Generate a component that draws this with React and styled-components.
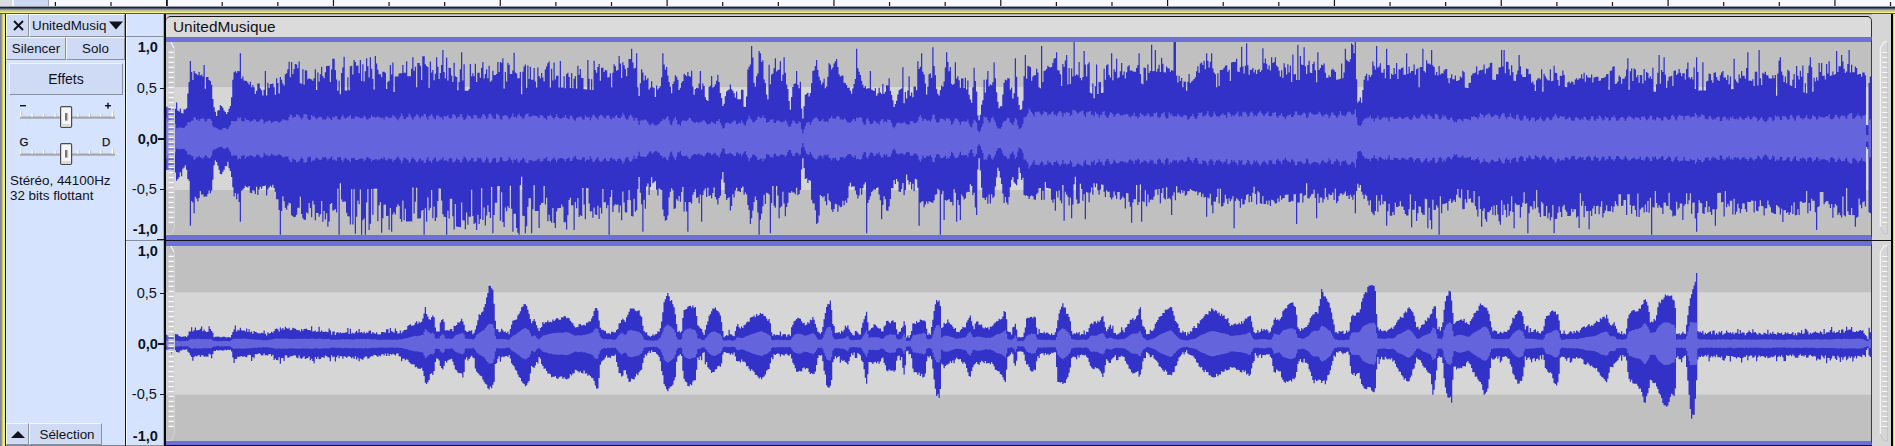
import React from "react";
import styled, { createGlobalStyle, css } from "styled-components";

const GlobalStyle = createGlobalStyle`
  body {
    margin: 0;
    background: #d6d6d6;
    font-family: "Liberation Sans", Arial, sans-serif;
    overflow: hidden;
  }
`;

/* ---------- waveform data ---------- */

// Envelopes are in thirds of a pixel: [offset, outer top, inner top, inner bottom, outer bottom, rms].
const LEFT_CENTER = 415;
const LEFT_SEGMENTS = [
  [0, [
    [500, 315, 330, 500, 515, 55], [524, 310, 330, 510, 520, 50], [527, 305, 330, 520, 545, 32], [545, 325, 340, 500, 520, 32],
    [557, 325, 345, 490, 505, 35], [568, 215, 240, 570, 600, 55], [585, 205, 225, 590, 615, 58], [605, 215, 250, 575, 590, 57],
    [632, 240, 265, 565, 590, 55], [638, 315, 325, 500, 530, 40], [648, 340, 350, 480, 490, 28], [660, 310, 325, 520, 535, 28],
    [680, 340, 345, 480, 500, 28], [692, 300, 320, 510, 540, 45], [699, 205, 225, 585, 605, 58], [720, 205, 230, 590, 610, 57],
    [730, 235, 255, 555, 575, 55], [770, 245, 275, 560, 590, 52], [815, 240, 275, 550, 580, 50], [835, 220, 265, 600, 640, 52],
    [850, 225, 260, 600, 630, 55], [865, 175, 215, 600, 640, 62], [890, 185, 230, 610, 660, 68], [950, 190, 250, 600, 670, 62],
    [988, 190, 250, 600, 670, 60],
  ]],
  [330, [
    [0, 185, 250, 590, 660, 62], [100, 175, 245, 600, 690, 62], [200, 185, 245, 590, 670, 64], [300, 175, 240, 590, 665, 67],
    [400, 185, 250, 600, 680, 64], [500, 185, 245, 590, 680, 66], [600, 195, 245, 590, 690, 66], [700, 195, 245, 590, 670, 62],
    [800, 190, 250, 590, 660, 64], [850, 190, 240, 590, 650, 64], [880, 180, 215, 600, 670, 68], [918, 180, 220, 590, 670, 60],
    [925, 290, 310, 525, 530, 35], [932, 200, 220, 600, 650, 60], [940, 220, 245, 600, 660, 55], [958, 240, 280, 555, 610, 42],
    [975, 250, 280, 540, 590, 42], [990, 245, 270, 560, 590, 45], [998, 175, 200, 620, 665, 62], [1010, 180, 220, 610, 660, 62],
    [1022, 270, 280, 540, 570, 42], [1032, 215, 240, 600, 660, 58], [1050, 250, 290, 560, 600, 40], [1062, 215, 225, 590, 640, 58],
    [1082, 210, 250, 590, 650, 55], [1100, 240, 290, 550, 600, 42], [1110, 215, 250, 580, 650, 52], [1130, 250, 290, 550, 600, 45],
    [1150, 235, 275, 560, 600, 48], [1165, 230, 250, 590, 630, 55], [1177, 320, 320, 510, 520, 30], [1185, 260, 290, 580, 590, 42],
    [1199, 250, 270, 590, 650, 45],
  ]],
  [730, [
    [0, 235, 260, 580, 640, 50], [15, 250, 300, 550, 580, 48], [45, 240, 300, 560, 580, 45], [55, 190, 210, 620, 650, 62],
    [63, 140, 180, 620, 680, 62], [75, 240, 290, 570, 590, 50], [88, 155, 170, 640, 690, 68], [100, 180, 220, 600, 640, 60],
    [110, 260, 310, 560, 580, 50], [120, 230, 250, 570, 600, 55], [135, 180, 220, 580, 650, 52], [165, 175, 230, 600, 650, 52],
    [178, 330, 350, 580, 590, 32], [185, 260, 270, 570, 590, 50], [200, 215, 250, 570, 590, 50], [211, 250, 280, 560, 580, 45],
    [214, 355, 358, 475, 475, 15], [219, 355, 358, 475, 475, 15], [222, 280, 285, 530, 535, 42], [240, 270, 285, 540, 570, 45],
    [247, 200, 215, 610, 650, 60], [262, 190, 220, 600, 660, 60], [272, 240, 270, 570, 600, 50], [300, 190, 230, 600, 630, 58],
    [320, 180, 205, 610, 650, 65], [340, 220, 240, 600, 650, 57], [362, 270, 290, 540, 560, 48], [380, 180, 220, 600, 630, 65],
    [395, 220, 260, 560, 590, 58], [402, 260, 290, 530, 550, 40], [410, 240, 270, 580, 620, 55], [420, 240, 290, 570, 590, 45],
    [440, 265, 290, 550, 570, 48], [455, 260, 290, 580, 630, 50], [475, 240, 260, 590, 640, 55], [490, 300, 330, 520, 540, 35],
    [505, 270, 290, 550, 590, 48], [530, 250, 300, 540, 590, 45], [560, 260, 290, 550, 580, 50], [567, 185, 200, 600, 650, 65],
    [590, 210, 270, 590, 615, 52], [608, 165, 200, 600, 625, 65], [622, 270, 300, 560, 570, 50], [632, 240, 270, 580, 610, 55],
    [648, 165, 200, 590, 620, 62], [665, 210, 270, 570, 620, 45], [677, 210, 240, 600, 640, 60], [690, 240, 270, 580, 610, 45],
    [712, 240, 270, 570, 590, 58], [722, 320, 330, 540, 550, 25], [730, 205, 220, 590, 620, 60], [738, 270, 290, 580, 640, 50],
    [743, 360, 362, 470, 475, 14], [747, 360, 362, 475, 480, 18], [752, 320, 330, 550, 560, 35], [760, 245, 270, 590, 620, 60],
    [780, 220, 260, 570, 610, 55], [793, 220, 260, 560, 600, 58], [803, 310, 320, 495, 500, 30], [812, 320, 340, 540, 550, 28],
    [820, 240, 250, 600, 615, 58], [836, 225, 260, 590, 615, 58], [848, 280, 300, 515, 530, 40], [856, 200, 240, 570, 590, 58],
    [865, 300, 320, 500, 510, 30], [875, 320, 330, 530, 550, 32], [880, 220, 250, 560, 580, 60], [890, 190, 220, 580, 600, 80],
    [930, 205, 250, 560, 610, 75], [980, 180, 240, 570, 610, 72], [1030, 175, 230, 570, 620, 82], [1090, 190, 260, 560, 590, 72],
    [1150, 190, 250, 570, 600, 70], [1199, 180, 210, 580, 640, 70],
  ]],
  [1130, [
    [0, 190, 220, 575, 630, 68], [50, 200, 245, 570, 620, 70], [75, 170, 215, 580, 610, 70], [120, 200, 220, 575, 620, 70],
    [170, 220, 260, 565, 585, 62], [215, 180, 210, 575, 600, 72], [270, 180, 240, 580, 620, 70], [320, 170, 215, 590, 620, 72],
    [370, 210, 235, 575, 610, 74], [400, 160, 190, 600, 625, 74], [480, 180, 230, 590, 610, 68], [500, 165, 220, 590, 610, 72],
    [550, 180, 230, 580, 610, 72], [600, 210, 235, 575, 610, 70], [640, 180, 220, 580, 600, 72], [665, 140, 165, 585, 600, 78],
    [676, 150, 170, 580, 610, 75], [680, 290, 310, 540, 555, 40], [695, 290, 310, 560, 580, 40], [701, 230, 260, 580, 600, 60],
    [730, 175, 215, 600, 640, 60], [780, 190, 225, 600, 650, 60], [850, 190, 225, 600, 650, 62], [900, 190, 225, 620, 670, 66],
    [950, 200, 235, 600, 660, 62], [975, 230, 250, 580, 620, 52], [1030, 200, 250, 590, 640, 62], [1060, 190, 225, 620, 665, 70],
    [1109, 180, 225, 610, 670, 66],
  ]],
  [1500, [
    [0, 180, 220, 600, 650, 68], [50, 190, 230, 610, 660, 62], [110, 215, 260, 590, 650, 58], [165, 195, 240, 610, 670, 65],
    [220, 225, 255, 600, 660, 58], [300, 215, 255, 600, 650, 60], [400, 195, 250, 600, 650, 62], [450, 210, 260, 590, 640, 60],
    [530, 200, 240, 600, 655, 64], [600, 190, 250, 600, 660, 66], [650, 220, 260, 600, 660, 60], [720, 210, 250, 590, 640, 60],
    [800, 205, 240, 600, 650, 58], [850, 185, 230, 610, 660, 64], [920, 195, 260, 590, 640, 60], [1000, 180, 230, 600, 660, 66],
    [1060, 180, 220, 620, 670, 68], [1095, 220, 240, 600, 640, 66], [1098, 375, 378, 440, 450, 10], [1103, 375, 378, 440, 450, 10],
    [1105, 230, 245, 630, 640, 60], [1117, 200, 210, 630, 640, 60],
  ]],
];

const LEFT_PEAKS = [
  [190.7, 183], [204.5, 195], [240.5, 160], [265.5, 213], [344, 170], [354, 180], [366, 175], [370, 172], [375.5, 168],
  [413, 172], [437, 172], [443, 150], [462, 157], [503, 175], [514.5, 158], [588, 180], [594, 182], [619, 168], [632, 146],
  [637, 160], [663, 160], [691, 212], [700, 213], [711, 228], [718, 224], [751, 138], [759.5, 153], [769, 194], [775, 175],
  [784, 172], [797, 213], [817, 180], [829, 190], [837, 177], [857, 146], [870, 213], [889, 235], [903, 202], [909, 229],
  [918, 184], [922, 160], [933, 142], [946.5, 157], [955.5, 187], [974, 203], [988, 213], [994, 187], [1015.5, 175],
  [1025, 165], [1042, 138], [1057, 157], [1067, 165], [1074.5, 126], [1084.5, 153], [1111, 160], [1117, 176], [1139, 160],
  [1152, 134], [1155, 150], [1162, 173], [1174.5, 126], [1175.7, 126], [1207, 160], [1212, 160], [1241, 140], [1246, 130],
  [1263, 145], [1298, 134], [1304.5, 142], [1318, 157], [1345, 146], [1351, 130], [1353, 134], [1355.7, 126], [1376, 138],
  [1387, 146], [1407, 160], [1423, 146], [1431, 150], [1501, 150], [1504, 150], [1519.5, 165], [1628, 175], [1659, 165],
  [1664, 172], [1697, 172], [1734, 176], [1748, 157], [1759.5, 150], [1780, 172], [1810, 172], [1836, 153], [1842, 165],
  [1849.5, 150],
];

const LEFT_DIPS = [
  [190.7, 677], [194, 640], [240.5, 665], [280.5, 704], [328, 680], [339.5, 704], [361, 704], [365.5, 704], [369, 690],
  [381, 698], [392, 695], [424.5, 704], [446, 704], [465, 688], [476, 690], [513, 695], [518, 698], [525.5, 700], [531, 700],
  [539, 684], [574, 690], [609.5, 704], [643, 695], [688, 695], [701, 665], [750, 672], [759, 704], [770.5, 700],
  [779, 655], [817, 672], [867, 700], [882, 658], [919.5, 677], [940.5, 704], [944, 660], [956, 665], [960, 660], [976, 645],
  [1055, 632], [1064.5, 662], [1072, 655], [1085.5, 658], [1131, 668], [1141, 665], [1172, 645], [1206, 650], [1213, 640],
  [1234.5, 685], [1296, 672], [1317, 655], [1355, 640], [1386, 677], [1412, 682], [1428, 685], [1432, 688], [1439.5, 704],
  [1481, 680], [1514, 685], [1528, 700], [1554.5, 700], [1579, 684], [1589, 688], [1652, 704], [1697, 695], [1715, 677],
  [1816, 690], [1855, 680],
];

const LEFT_NOTCHES_UP = [[340.5, 283], [394, 276], [522, 283], [416, 262], [565, 265], [469, 268], [612, 262], [1186.7, 272], [1094.5, 295], [1217, 262], [1419, 262], [1543, 275], [1655, 275], [1699, 272], [1776, 287], [1807, 280]];
const LEFT_NOTCHES_DOWN = [[340.5, 550], [522, 530], [1075.5, 530], [1307, 550], [1254, 560], [1136.5, 555], [431, 570], [501, 577], [612, 570], [1537, 570], [1655, 573], [1725, 573], [1846, 565], [1524, 577]];

// [offset, top, bottom]
const RIGHT_CENTER = 1031;
const RIGHT_SEGMENTS = [
  [0, [
    [500, 1007, 1055], [525, 1005, 1055], [545, 1010, 1050], [560, 1010, 1048], [570, 990, 1068], [600, 992, 1070], [632, 992, 1065],
    [640, 1011, 1052], [690, 1011, 1050], [697, 990, 1072], [730, 988, 1072], [760, 997, 1066], [800, 1003, 1062], [830, 990, 1076],
    [860, 988, 1070], [900, 990, 1072], [960, 993, 1074], [988, 993, 1070],
  ]],
  [330, [
    [0, 1000, 1068], [50, 998, 1072], [100, 995, 1074], [150, 1000, 1066], [200, 998, 1064], [220, 993, 1074], [240, 975, 1090],
    [262, 968, 1100], [278, 960, 1110], [284, 920, 1150], [292, 955, 1148], [300, 960, 1120], [309, 945, 1125], [315, 990, 1075],
    [325, 992, 1080], [330, 965, 1105], [338, 950, 1105], [345, 992, 1080], [365, 992, 1075], [375, 972, 1110], [393, 958, 1125],
    [399, 962, 1135], [404, 993, 1075], [430, 998, 1070], [436, 980, 1115], [445, 945, 1120], [460, 930, 1140], [467, 895, 1155],
    [475, 862, 1165], [486, 860, 1158], [490, 900, 1155], [496, 990, 1072], [535, 1000, 1068], [545, 965, 1090], [560, 955, 1120],
    [572, 925, 1140], [584, 912, 1160], [597, 940, 1145], [602, 975, 1095], [612, 958, 1100], [625, 1000, 1065], [637, 968, 1100],
    [665, 962, 1130], [712, 952, 1135], [735, 978, 1110], [765, 972, 1118], [785, 955, 1130], [794, 922, 1155], [801, 930, 1168],
    [810, 985, 1090], [820, 995, 1070], [855, 1000, 1068], [864, 975, 1115], [873, 955, 1130], [885, 965, 1105], [893, 940, 1145],
    [903, 925, 1140], [925, 935, 1120], [934, 955, 1110], [940, 998, 1070], [960, 1006, 1055], [980, 1004, 1058], [990, 985, 1090],
    [1000, 910, 1150], [1010, 880, 1178], [1023, 905, 1158], [1033, 935, 1140], [1040, 990, 1070], [1052, 1005, 1062],
    [1058, 935, 1130], [1075, 918, 1160], [1096, 925, 1135], [1101, 975, 1075], [1120, 1005, 1060], [1135, 950, 1110],
    [1150, 922, 1120], [1160, 930, 1105], [1172, 955, 1095], [1178, 1010, 1055], [1199, 1003, 1066],
  ]],
  [730, [
    [0, 1008, 1058], [12, 1005, 1060], [20, 975, 1090], [35, 985, 1080], [50, 968, 1100], [68, 950, 1115], [90, 940, 1136],
    [105, 950, 1120], [118, 965, 1100], [124, 1002, 1065], [180, 1006, 1065], [188, 965, 1095], [203, 950, 1118], [225, 975, 1105],
    [247, 955, 1125], [256, 970, 1105], [262, 1000, 1068], [274, 1000, 1065], [281, 950, 1110], [290, 910, 1162], [301, 905, 1162],
    [307, 970, 1080], [315, 1000, 1068], [335, 995, 1078], [352, 972, 1095], [360, 1003, 1062], [390, 1000, 1065], [398, 965, 1095],
    [409, 935, 1155], [414, 990, 1090], [430, 975, 1088], [445, 980, 1088], [455, 1000, 1068], [466, 968, 1105], [480, 965, 1118],
    [495, 968, 1110], [500, 1000, 1065], [512, 998, 1070], [522, 953, 1130], [527, 1012, 1055], [541, 1008, 1060], [547, 970, 1110],
    [565, 965, 1122], [583, 958, 1132], [590, 1000, 1066], [602, 1000, 1072], [610, 935, 1130], [617, 905, 1185], [628, 900, 1190],
    [633, 985, 1090], [643, 968, 1103], [654, 960, 1090], [670, 985, 1085], [682, 995, 1075], [705, 980, 1095], [718, 942, 1140],
    [728, 988, 1090], [740, 965, 1090], [765, 985, 1085], [785, 985, 1090], [793, 965, 1105], [812, 955, 1125], [825, 930, 1148],
    [832, 995, 1068], [845, 1002, 1060], [855, 965, 1105], [861, 1012, 1055], [878, 1012, 1055], [888, 958, 1090], [903, 950, 1115],
    [915, 955, 1105], [921, 1000, 1065], [975, 1002, 1062], [982, 960, 1145], [995, 908, 1150], [1003, 925, 1150], [1018, 960, 1110],
    [1024, 1000, 1070], [1070, 1002, 1066], [1080, 970, 1100], [1100, 965, 1105], [1118, 952, 1132], [1126, 990, 1080],
    [1140, 978, 1085], [1155, 1000, 1068], [1180, 995, 1072], [1199, 965, 1110],
  ]],
  [1130, [
    [0, 960, 1115], [22, 950, 1118], [28, 918, 1130], [36, 975, 1090], [50, 1003, 1055], [70, 985, 1072], [82, 955, 1090],
    [105, 930, 1115], [122, 922, 1132], [135, 960, 1100], [150, 995, 1062], [170, 1003, 1055], [190, 990, 1072], [212, 960, 1105],
    [245, 928, 1132], [265, 942, 1122], [290, 955, 1110], [300, 975, 1105], [325, 972, 1110], [345, 960, 1115], [358, 942, 1132],
    [366, 985, 1090], [372, 998, 1060], [395, 988, 1066], [422, 998, 1065], [430, 955, 1115], [447, 965, 1110], [457, 935, 1145],
    [482, 902, 1145], [495, 920, 1130], [502, 985, 1085], [515, 995, 1075], [530, 975, 1090], [548, 940, 1145], [563, 940, 1140],
    [573, 868, 1145], [585, 895, 1148], [600, 920, 1110], [612, 990, 1062], [625, 998, 1058], [655, 995, 1060], [662, 950, 1125],
    [685, 940, 1120], [697, 895, 1160], [718, 852, 1165], [730, 860, 1178], [735, 880, 1160], [740, 985, 1075], [770, 992, 1075],
    [790, 985, 1080], [800, 962, 1105], [817, 950, 1130], [835, 922, 1150], [848, 940, 1110], [858, 985, 1072], [870, 982, 1085],
    [885, 965, 1110], [900, 945, 1120], [907, 930, 1185], [913, 910, 1150], [922, 985, 1075], [935, 992, 1070], [941, 920, 1145],
    [950, 885, 1190], [960, 870, 1190], [962, 890, 1222], [966, 935, 1150], [971, 975, 1090], [980, 965, 1108], [997, 958, 1100],
    [1015, 972, 1085], [1030, 945, 1120], [1050, 915, 1145], [1062, 915, 1185], [1073, 930, 1160], [1082, 985, 1080],
    [1092, 998, 1072], [1109, 995, 1072],
  ]],
  [1500, [
    [0, 995, 1072], [25, 995, 1072], [35, 960, 1110], [45, 945, 1140], [55, 928, 1152], [66, 940, 1140], [73, 990, 1075],
    [100, 995, 1075], [128, 1000, 1065], [136, 948, 1110], [155, 935, 1125], [163, 938, 1158], [174, 942, 1145], [180, 1000, 1068],
    [200, 1000, 1075], [235, 995, 1075], [255, 978, 1090], [280, 975, 1100], [302, 955, 1125], [320, 948, 1148], [328, 980, 1100],
    [342, 970, 1095], [352, 998, 1070], [377, 998, 1068], [384, 940, 1135], [400, 935, 1150], [420, 925, 1165], [433, 895, 1215],
    [443, 925, 1170], [450, 968, 1140], [465, 960, 1150], [475, 910, 1180], [497, 883, 1225], [515, 892, 1180], [523, 905, 1200],
    [528, 1000, 1068], [555, 998, 1070], [563, 930, 1150], [572, 882, 1258], [581, 860, 1240], [588, 820, 1140], [592, 1000, 1070],
    [620, 998, 1068], [700, 1002, 1072], [800, 1000, 1070], [900, 1001, 1068], [1000, 995, 1072], [1085, 990, 1072],
    [1097, 1005, 1055], [1101, 1025, 1040], [1105, 993, 1072], [1117, 1005, 1068],
  ]],
];

const CLIP_X = 166;
const CLIP_W = 1706;
const STEP = 1.25;

const flatten = (segments) =>
  segments.flatMap(([origin, points]) => points.map(([x, ...rest]) => [origin + x / 3, ...rest]));

function sampler(points) {
  let i = 0;
  return (x) => {
    while (i < points.length - 2 && points[i + 1][0] < x) i += 1;
    const a = points[i];
    const b = points[i + 1];
    const t = Math.min(1, Math.max(0, (x - a[0]) / (b[0] - a[0] || 1)));
    return a.slice(1).map((v, k) => v + (b[k + 1] - v) * t);
  };
}

function randomSource(seed) {
  let s = seed;
  return () => {
    s = (s * 1664525 + 1013904223) % 4294967296;
    return s / 4294967296;
  };
}

function stepPath(columns) {
  const f = (n) => n.toFixed(2);
  let d = `M${f(columns[0].x)} ${f(columns[0].top)}`;
  columns.forEach((c) => {
    d += `V${f(c.top)}H${f(c.x + STEP)}`;
  });
  for (let i = columns.length - 1; i >= 0; i -= 1) {
    d += `V${f(columns[i].bottom)}H${f(columns[i].x)}`;
  }
  return `${d}Z`;
}

const hit = (list, x) => list.find(([px]) => px >= x - 0.05 && px < x + STEP - 0.05);

// Spread around an envelope: mostly between the inner (0) and outer (1) edge, with lone spikes and notches.
function jaggedness(rnd) {
  let level = 0.5;
  return () => {
    if (rnd() > 0.15) {
      level = rnd() ** 1.2;
      const kind = rnd();
      if (kind < 0.12) level += 0.3;
      else if (kind > 0.9) level = -0.35;
    }
    return level;
  };
}

function buildLeft() {
  const sample = sampler(flatten(LEFT_SEGMENTS));
  const rnd = randomSource(71);
  const upper = jaggedness(rnd);
  const lower = jaggedness(rnd);
  const peaks = [];
  const rms = [];
  for (let x = CLIP_X; x < CLIP_X + CLIP_W - 0.5; x += STEP) {
    const [hiTop, loTop, loBot, hiBot, body] = sample(x);
    let top = Math.max(128, loTop + (hiTop - loTop) * upper());
    let bottom = Math.min(704, loBot + (hiBot - loBot) * lower());
    const p = hit(LEFT_PEAKS, x);
    const d = hit(LEFT_DIPS, x);
    const nu = hit(LEFT_NOTCHES_UP, x);
    const nd = hit(LEFT_NOTCHES_DOWN, x);
    if (p) [, top] = p;
    if (d) [, bottom] = d;
    if (nu) [, top] = nu;
    if (nd) [, bottom] = nd;
    const wobble = (rnd() - 0.5) * 0.16 + 0.09 * Math.sin(x * 0.85);
    const r = Math.min(body * (1 + wobble), LEFT_CENTER - top - 4);
    const offset = 42;
    peaks.push({ x: x - CLIP_X, top: top / 3 - offset, bottom: bottom / 3 - offset });
    rms.push({ x: x - CLIP_X, top: (LEFT_CENTER - r) / 3 - offset, bottom: (LEFT_CENTER + r) / 3 - offset });
  }
  return [stepPath(peaks), stepPath(rms)];
}

function buildRight() {
  const sample = sampler(flatten(RIGHT_SEGMENTS));
  const rnd = randomSource(19);
  const peaks = [];
  const rms = [];
  for (let x = CLIP_X; x < CLIP_X + CLIP_W - 0.5; x += STEP) {
    let [top, bottom] = sample(x);
    const size = (bottom - top) / 2;
    const body = Math.max(8, size < 45 ? size * 0.36 : 15 + (size - 45) * 0.42);
    const jag = size < 22 ? 3 : 11;
    top += (rnd() - 0.5) * jag;
    bottom += (rnd() - 0.5) * jag;
    if (size > 28 && size < 45) {
      if (rnd() < 0.13) top -= 10;
      if (rnd() < 0.13) bottom += 13;
    }
    const r = Math.min(body, 64) + (rnd() - 0.5) * 2;
    const offset = 246;
    peaks.push({ x: x - CLIP_X, top: top / 3 - offset, bottom: bottom / 3 - offset });
    rms.push({ x: x - CLIP_X, top: (RIGHT_CENTER - r) / 3 - offset, bottom: (RIGHT_CENTER + r) / 3 - offset });
  }
  return [stepPath(peaks), stepPath(rms)];
}

const [LEFT_PEAK_PATH, LEFT_RMS_PATH] = buildLeft();
const [RIGHT_PEAK_PATH, RIGHT_RMS_PATH] = buildRight();

/* ---------- layout ---------- */

const Window = styled.div`
  width: 1895px;
  height: 446px;
  display: flex;
  flex-direction: column;
  overflow: hidden;
  color: #10121a;
  white-space: nowrap;
`;

const Ruler = styled.div`
  height: 6px;
  flex: none;
  background: linear-gradient(90deg, #d9dbe2 0 12px, #f4f6fd 12px 14px, #cdd8f2 14px 48px, #9aa0b0 48px 49px, #f8f9ff 49px);

  svg {
    display: block;
  }
`;

const FrameTop = styled.div`
  height: 8px;
  flex: none;
  background: linear-gradient(
    180deg,
    #969ba4 0 1px,
    #20262e 1px 2px,
    #4d566a 2px 3px,
    #8f928e 3px 4px,
    #bfbf94 4px 5px,
    #d3d276 5px 6px,
    #f0ee7c 6px 7px,
    #5c5a36 7px 8px
  );
`;

const TrackFrame = styled.div`
  flex: 1;
  min-height: 0;
  display: flex;
  border-left: 6px solid transparent;
  border-right: 4px solid transparent;
  background:
    linear-gradient(90deg, #80839a 0 1px, #9a9b98 1px 2px, #c9c86e 2px 3px, #efec7e 3px 5px, #14140c 5px 6px) 0 0 / 6px 100% no-repeat border-box,
    linear-gradient(90deg, #050505 0 2px, #d9d766 2px 3px, #f5f390 3px 4px) 100% 0 / 4px 100% no-repeat border-box,
    #d6d6d6;
`;

const Panel = styled.div`
  width: 119px;
  flex: none;
  display: flex;
  flex-direction: column;
  background: #d6e3ff;
`;

const ButtonRow = styled.div`
  display: flex;
  height: 23px;
  flex: none;
`;

const PanelButton = styled.button`
  box-sizing: border-box;
  width: ${(p) => p.$w}px;
  height: 100%;
  padding: 0 0 ${(p) => p.$lift || 0}px ${(p) => p.$indent || 0}px;
  display: flex;
  align-items: center;
  justify-content: center;
  gap: 3px;
  font: ${(p) => p.$size || 13.4}px "Liberation Sans", Arial, sans-serif;
  color: #10121a;
  background: #cfdbf4;
  border: 1px solid;
  border-color: #f2f6ff #8b909c #8b909c #f2f6ff;
  ${(p) => p.$menu && css`
    justify-content: flex-start;
  `}
`;

const EffectsArea = styled.div`
  padding: 3px 3px 0;
  height: 32px;
  flex: none;
`;

const SliderBlock = styled.div`
  margin: ${(p) => p.$mt}px 0 0 13px;
  height: 29px;
  width: 98px;
  flex: none;
`;

const Info = styled.div`
  margin: 7px 0 0 4px;
  font-size: 13.4px;
  line-height: 15px;
`;

const PanelFooter = styled.div`
  margin-top: auto;
  height: 22px;
  display: flex;
  border-bottom: 1px solid #80848e;
`;

const ScaleColumn = styled.div`
  width: 41px;
  flex: none;
  box-sizing: border-box;
  border-left: 1px solid #16181f;
  border-right: 2px solid #08090c;
  background: #d6e3ff;
  box-shadow: inset 1px 0 #f4f8ff, inset -1px 0 #a9b0bf;
`;

const ScaleHead = styled.div`
  height: 22px;
  border-bottom: 1px solid #8b8f9b;
`;

const Scale = styled.div`
  height: ${(p) => p.$h}px;
  box-sizing: border-box;
  border-bottom: 1px solid #8b8f9b;
  display: flex;
  flex-direction: column;

  &::after {
    content: "";
    align-self: flex-end;
    margin-top: auto;
    width: 7px;
    height: 1px;
    background: #14161c;
  }
`;

const Mark = styled.div`
  height: 18px;
  flex: none;
  padding-top: ${(p) => p.$gap}px;
  display: flex;
  align-items: center;
  justify-content: flex-end;
  gap: ${(p) => (p.$bold ? 0 : 3)}px;
  font-size: 14.6px;
  font-weight: ${(p) => (p.$bold ? 700 : 400)};
  line-height: 18px;

  &::after {
    content: "";
    width: ${(p) => (p.$bold ? 6 : 4)}px;
    height: ${(p) => (p.$bold ? 2 : 1)}px;
    background: ${(p) => (p.$tick ? "#14161c" : "transparent")};
  }
`;

const Clips = styled.div`
  width: 1706px;
  flex: none;
  display: flex;
  flex-direction: column;
  background: linear-gradient(180deg, #8c8c8c 0, #d6d0d6 1px, #d6d0d6 100%);
`;

const ClipHeader = styled.div`
  margin-top: 2px;
  height: 21px;
  flex: none;
  box-sizing: border-box;
  padding-left: 7px;
  border-top: 1px solid #111;
  border-right: 1px solid #333;
  border-radius: 5px 5px 0 0;
  background: #dbdbdb;
  font-size: 15.4px;
  line-height: 20px;
`;

const Channel = styled.div`
  height: ${(p) => p.$h}px;
  flex: none;
  box-sizing: border-box;
  border: 0 solid #6e6edc;
  border-top-width: 5px;
  border-bottom-width: ${(p) => p.$bottom}px;
  border-right: 1px solid #3c3c3c;
  overflow: hidden;

  svg {
    display: block;
  }
`;

const Divider = styled.div`
  height: 1px;
  flex: none;
  background: #14141a;
`;

const RightMargin = styled.div`
  flex: 1;
  display: flex;
  flex-direction: column;
  background: #d6d6d6;
  box-sizing: border-box;
`;

const MarginCell = styled.div`
  height: ${(p) => p.$h}px;
  padding: ${(p) => p.$pt}px 3px 0 0;
  box-sizing: border-box;
  display: flex;
  justify-content: flex-end;
  flex: none;
`;

function RulerTicks() {
  const ticks = Array.from({ length: 34 }, (_, k) => ({ x: 55.4 + k * 55.61, major: k % 3 === 2 }));
  return (
    <svg width="1895" height="6">
      {ticks.map(({ x, major }) => (
        <rect key={x} x={x - 0.6} y={major ? 0 : 2} width={x > 160 && x < 170 ? 1.8 : 1.2} height={major ? 6 : 4} fill="#15171c" />
      ))}
    </svg>
  );
}

function Slider({ left, right, signs }) {
  const marks = Array.from({ length: 9 }, (_, i) => 1 + i * 11.45);
  return (
    <svg width="98" height="30">
      {signs ? (
        <g fill="#10121a">
          <rect x="1" y="5" width="6" height="1.4" />
          <rect x="86" y="5" width="6" height="1.4" />
          <rect x="88.3" y="2.7" width="1.4" height="6" />
        </g>
      ) : (
        <g fill="#10121a" fontSize="11.5" stroke="#10121a" strokeWidth="0.25">
          <text x="0.5" y="9">{left}</text>
          <text x="83" y="9">{right}</text>
        </g>
      )}
      <rect x="1" y="16.5" width="95" height="2.2" fill="#a6a6a6" />
      {marks.map((x, i) => (
        <g key={x}>
          <rect x={x} y={i % 8 ? 13.3 : 11.3} width="1.4" height={i % 8 ? 3.4 : 5.4} fill="#fff" />
          <rect x={x + 1.4} y={i % 8 ? 13.3 : 11.3} width="0.7" height={i % 8 ? 3.4 : 5.4} fill="#b4b8c0" />
        </g>
      ))}
      <rect x="41.6" y="6.6" width="11" height="20.8" rx="1.2" fill="#f6f6f6" stroke="#4a4a50" strokeWidth="1.2" />
      <rect x="42.6" y="24" width="9" height="2.6" fill="#dcdcdc" />
      <rect x="46" y="13" width="2.2" height="7.6" fill="#77777c" />
      <rect x="48.2" y="13" width="0.9" height="7.6" fill="#b5b5b8" />
    </svg>
  );
}

function LeftHandle({ height }) {
  const ribs = Array.from({ length: Math.floor((height - 22) / 5) + 1 }, (_, i) => 10 + i * 5);
  return (
    <g>
      <rect x="0.5" y="0" width="8" height={height} fill="#c6c6c6" fillOpacity="0.35" />
      {ribs.map((y) => (
        <g key={y}>
          <rect x="2.5" y={y - 2} width="5.4" height="1.8" fill="#cacaca" />
          <rect x="2.5" y={y - 0.2} width="5.4" height="1.3" fill="#fafafa" />
        </g>
      ))}
      <path d="M1 -0.5H4.7L7.9 6" fill="none" stroke="#f2f2f2" strokeWidth="1.2" />
      <path d={`M8.4 6V${height - 7}L5 ${height - 0.5}H0`} fill="none" stroke="#d2d2d2" strokeWidth="1" />
    </g>
  );
}

function RightHandle({ height }) {
  const ribs = Array.from({ length: Math.floor((height - 22) / 5) + 1 }, (_, i) => 11 + i * 5);
  return (
    <svg width="9" height={height + 2}>
      <path d={`M8.4 0.8H5.2L1.4 7V${height - 7}`} fill="none" stroke="#f3f3f3" strokeWidth="1.3" />
      <path d={`M1.4 ${height - 7}L5.2 ${height}H8.4V1`} fill="none" stroke="#c4c4c4" strokeWidth="1" />
      {ribs.map((y) => (
        <g key={y}>
          <rect x="3" y={y} width="5.4" height="1.3" fill="#f8f8f8" />
          <rect x="3" y={y + 1.3} width="5.4" height="1.2" fill="#c8c8c8" />
        </g>
      ))}
    </svg>
  );
}

function Waveform({ height, band, peaks, rms }) {
  return (
    <svg width="1705" height={height}>
      <rect width="1705" height={height} fill="#c0c0c0" />
      <rect y={band[0]} width="1705" height={band[1] - band[0]} fill="#d6d6d6" />
      <path d={peaks} fill="#3232c8" />
      <path d={rms} fill="#6464dc" />
      <LeftHandle height={height} />
    </svg>
  );
}

export default function App() {
  return (
    <Window>
      <GlobalStyle />
      <Ruler>
        <RulerTicks />
      </Ruler>
      <FrameTop />
      <TrackFrame>
        <Panel>
          <ButtonRow>
            <PanelButton $w={23} $indent={2}>
              <svg width="11" height="11" viewBox="0 0 11 11">
                <path d="M1 1L10 10M10 1L1 10" stroke="#10121a" strokeWidth="1.9" />
              </svg>
            </PanelButton>
            <PanelButton $w={96} $menu $indent={2}>
              UnitedMusiq
              <svg width="14" height="9" viewBox="0 0 14 9">
                <path d="M0 0.5H14L7 8.5Z" fill="#10121a" />
              </svg>
            </PanelButton>
          </ButtonRow>
          <ButtonRow>
            <PanelButton $w={60}>Silencer</PanelButton>
            <PanelButton $w={59}>Solo</PanelButton>
          </ButtonRow>
          <EffectsArea>
            <PanelButton $w={114} $size={14} $lift={1}>Effets</PanelButton>
          </EffectsArea>
          <SliderBlock $mt={5}>
            <Slider signs />
          </SliderBlock>
          <SliderBlock $mt={8}>
            <Slider left="G" right="D" />
          </SliderBlock>
          <Info>
            Stéréo, 44100Hz
            <br />
            32 bits flottant
          </Info>
          <PanelFooter>
            <PanelButton $w={23} $indent={1}>
              <svg width="14" height="7" viewBox="0 0 14 7">
                <path d="M7 0L14 7H0Z" fill="#10121a" />
              </svg>
            </PanelButton>
            <PanelButton $w={73} $indent={3}>Sélection</PanelButton>
          </PanelFooter>
        </Panel>
        <ScaleColumn>
          <ScaleHead />
          <Scale $h={204}>
            <Mark $bold $gap={1}>1,0</Mark>
            <Mark $gap={23} $tick>0,5</Mark>
            <Mark $bold $gap={33} $tick>0,0</Mark>
            <Mark $gap={32} $tick>-0,5</Mark>
            <Mark $bold $gap={22}>-1,0</Mark>
          </Scale>
          <Scale $h={205}>
            <Mark $bold $gap={1}>1,0</Mark>
            <Mark $gap={24} $tick>0,5</Mark>
            <Mark $bold $gap={33} $tick>0,0</Mark>
            <Mark $gap={32} $tick>-0,5</Mark>
            <Mark $bold $gap={24}>-1,0</Mark>
          </Scale>
        </ScaleColumn>
        <Clips>
          <ClipHeader>UnitedMusique</ClipHeader>
          <Channel $h={203} $bottom={5}>
            <Waveform height={193} band={[45, 148]} peaks={LEFT_PEAK_PATH} rms={LEFT_RMS_PATH} />
          </Channel>
          <Divider />
          <Channel $h={204} $bottom={4}>
            <Waveform height={195} band={[46.3, 148.7]} peaks={RIGHT_PEAK_PATH} rms={RIGHT_RMS_PATH} />
          </Channel>
          <Divider />
        </Clips>
        <RightMargin>
          <MarginCell $h={226} $pt={27}>
            <RightHandle height={193} />
          </MarginCell>
          <Divider />
          <MarginCell $h={205} $pt={4}>
            <RightHandle height={196} />
          </MarginCell>
        </RightMargin>
      </TrackFrame>
    </Window>
  );
}
